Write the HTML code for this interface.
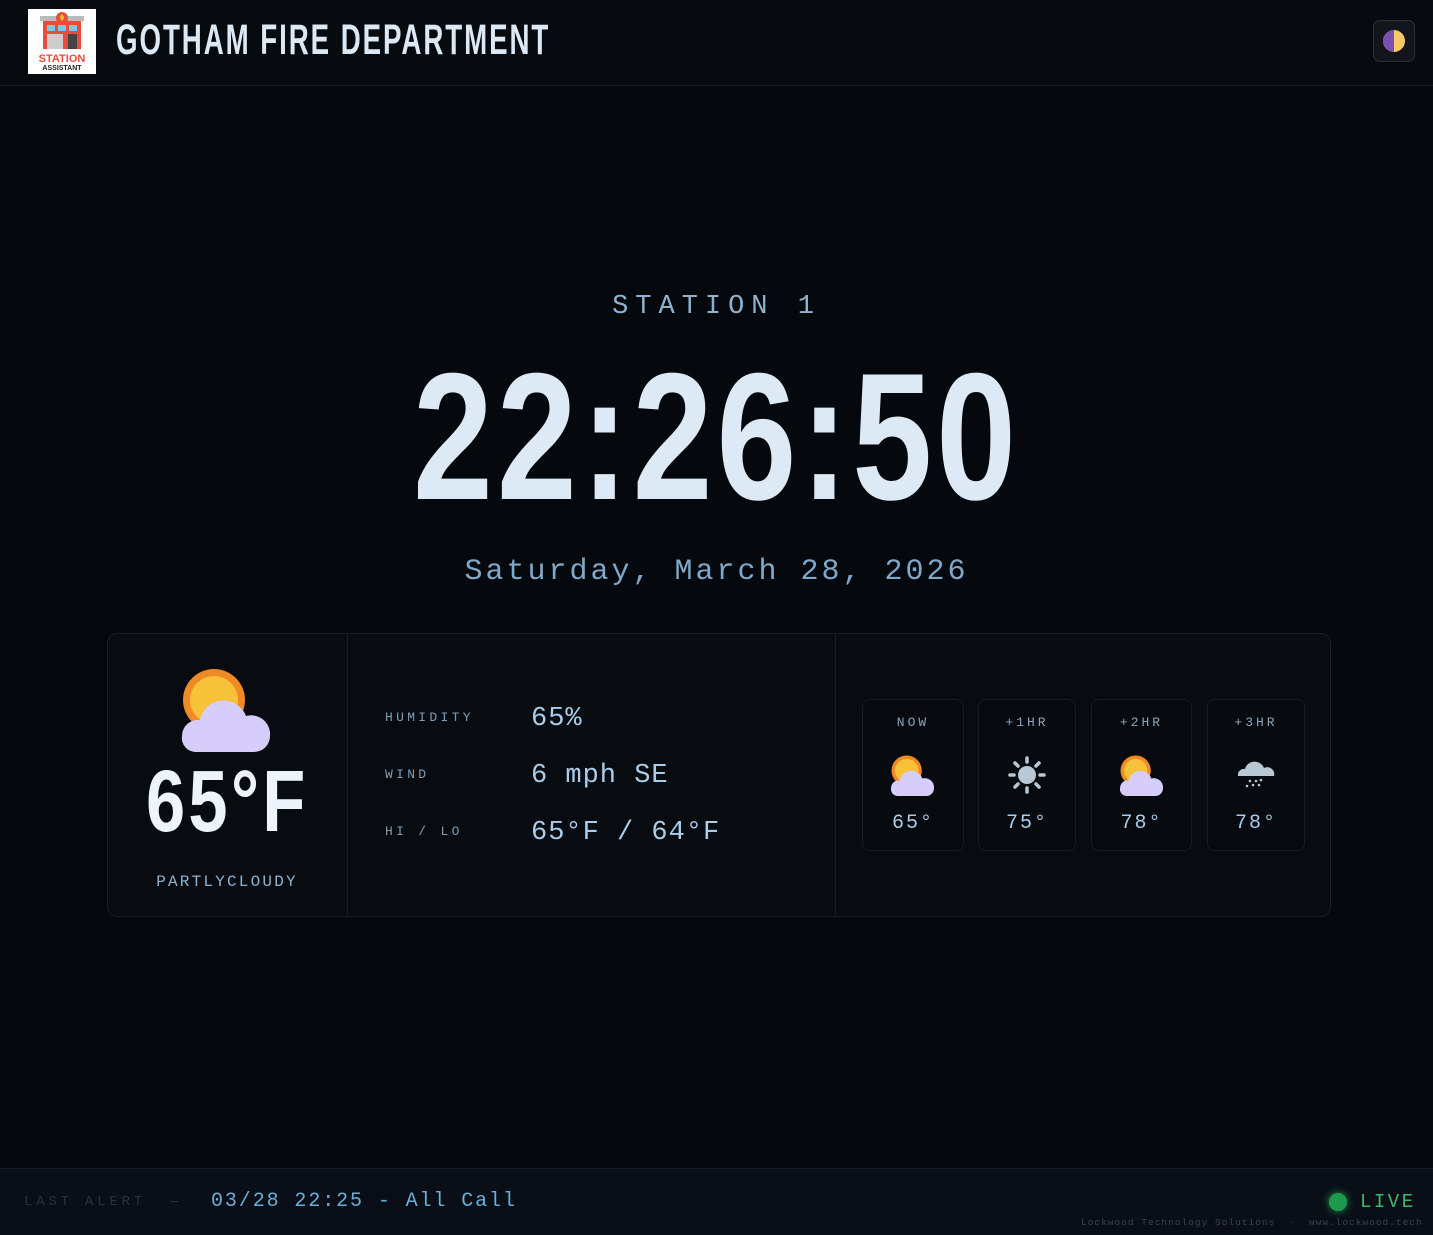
<!DOCTYPE html>
<html><head><meta charset="utf-8"><style>
*{margin:0;padding:0;box-sizing:border-box}
body{width:1433px;height:1235px;background:#05080c;position:relative;overflow:hidden;font-family:"Liberation Mono","DejaVu Sans Mono",monospace}
.a{position:absolute;white-space:nowrap}
.cond{font-family:"Liberation Sans",sans-serif;font-weight:bold;display:inline-block;transform-origin:left top}
.m{font-family:"Liberation Mono",monospace}
.lbl{font-size:13px;letter-spacing:3.3px;color:#7f9cb6}
.val{font-size:27px;color:#a9cdea;letter-spacing:1px}
.mc{position:absolute;top:699px;height:152px;border:1px solid #141c26;border-radius:8px;background:#070a0e;text-align:center}
.mc .h{position:absolute;top:15px;width:100%;font-size:13px;letter-spacing:3px;color:#8aa4bc}
.mc .t{position:absolute;top:112px;width:100%;font-size:20px;letter-spacing:2px;color:#a9cdea}
.mc svg{position:absolute;left:50%;top:55px;transform:translateX(-50%)}
</style></head><body>
<!-- header -->
<div class="a" style="left:0;top:0;width:1433px;height:86px;background:#070a0f;border-bottom:1px solid #141b24"></div>
<div class="a" style="left:28px;top:9px;width:68px;height:65px;background:#fff">
<svg width="68" height="65" viewBox="0 0 68 65">
<rect x="12" y="7" width="44" height="5" fill="#bbb"/><circle cx="34" cy="9" r="6" fill="#e74c3c"/><path d="M34 5c2 2 3 4 0 7-3-3-2-5 0-7z" fill="#f7c21b"/>
<rect x="15" y="12" width="38" height="28" fill="#e74c3c"/>
<rect x="19" y="16" width="8" height="6" fill="#7ec8e3"/><rect x="30" y="16" width="8" height="6" fill="#7ec8e3"/><rect x="41" y="16" width="8" height="6" fill="#7ec8e3"/>
<rect x="19" y="25" width="16" height="15" fill="#ccc"/><rect x="40" y="25" width="9" height="15" fill="#444"/>
<text x="34" y="53" text-anchor="middle" font-family="Liberation Sans" font-weight="bold" font-size="11" fill="#e74c3c">STATION</text>
<text x="34" y="61" text-anchor="middle" font-family="Liberation Sans" font-weight="bold" font-size="7" fill="#222">ASSISTANT</text>
</svg></div>
<div class="a" style="left:116px;top:16px"><span class="cond" style="font-size:43px;color:#dce9f5;letter-spacing:3px;transform:scaleX(.644)">GOTHAM FIRE DEPARTMENT</span></div>
<div class="a" style="left:1373px;top:20px;width:42px;height:42px;border:1px solid #2a3038;border-radius:7px;background:#12161c">
<svg width="42" height="42" viewBox="0 0 42 42" style="position:absolute;left:-1px;top:-1px"><circle cx="21" cy="21" r="11" fill="#f6c86a"/><path d="M21 10a11 11 0 0 0 0 22z" fill="#7a4fb0"/></svg></div>

<!-- station + clock -->
<div class="a m" style="left:0;width:1433px;top:292px;text-align:center;font-size:27px;letter-spacing:7px;color:#8fb2cf">STATION 1</div>
<div class="a" style="left:413px;top:338px"><span class="cond" style="font-size:181px;color:#dde9f5;letter-spacing:5px;transform:scaleX(.794);line-height:1.1">22:26:50</span></div>
<div class="a m" style="left:0;width:1433px;top:555px;text-align:center;font-size:30px;letter-spacing:3px;color:#7fa8c9">Saturday, March 28, 2026</div>

<!-- weather card -->
<div class="a" style="left:107px;top:633px;width:1224px;height:284px;border:1px solid #161f2a;border-radius:10px;background:#080c11"></div>
<div class="a" style="left:347px;top:634px;width:1px;height:282px;background:#151d27"></div>
<div class="a" style="left:835px;top:634px;width:1px;height:282px;background:#151d27"></div>
<svg class="a" style="left:180px;top:668px" width="94" height="86" viewBox="0 0 94 86">
<circle cx="34" cy="32" r="31" fill="#f08a24"/><circle cx="34" cy="32" r="24" fill="#f7c23a"/>
<path d="M16 84a14 14 0 0 1-14-16a16 16 0 0 1 18-16a24 24 0 0 1 46-4a19 19 0 0 1 24 20a16 16 0 0 1-16 16z" fill="#d6cdfa"/>
</svg>
<div class="a" style="left:146px;top:754px"><span class="cond" style="font-size:87px;color:#eef4fb;letter-spacing:4px;transform:scaleX(.81);line-height:1.1">65°F</span></div>
<div class="a m" style="left:107px;width:240px;top:873px;text-align:center;font-size:16px;letter-spacing:2.2px;color:#8fb2cf">PARTLYCLOUDY</div>

<div class="a lbl" style="left:385px;top:710px">HUMIDITY</div>
<div class="a lbl" style="left:385px;top:767px">WIND</div>
<div class="a lbl" style="left:385px;top:824px">HI / LO</div>
<div class="a val" style="left:531px;top:704px">65%</div>
<div class="a val" style="left:531px;top:761px">6 mph SE</div>
<div class="a val" style="left:531px;top:818px">65°F / 64°F</div>

<div class="mc" style="left:862px;width:102px"><div class="h">NOW</div>
<svg width="48" height="42" viewBox="0 0 94 86"><circle cx="34" cy="32" r="31" fill="#f08a24"/><circle cx="34" cy="32" r="24" fill="#f7c23a"/><path d="M16 84a14 14 0 0 1-14-16a16 16 0 0 1 18-16a24 24 0 0 1 46-4a19 19 0 0 1 24 20a16 16 0 0 1-16 16z" fill="#d6cdfa"/></svg>
<div class="t">65°</div></div>
<div class="mc" style="left:978px;width:98px"><div class="h">+1HR</div>
<svg width="38" height="38" viewBox="0 0 38 38" style="top:56px"><circle cx="19" cy="19" r="9" fill="#b8c8d4"/><g stroke="#b8c8d4" stroke-width="3.5" stroke-linecap="round"><path d="M19 2v4M19 32v4M2 19h4M32 19h4M7 7l3 3M28 28l3 3M31 7l-3 3M10 28l-3 3"/></g></svg>
<div class="t">75°</div></div>
<div class="mc" style="left:1091px;width:101px"><div class="h">+2HR</div>
<svg width="48" height="42" viewBox="0 0 94 86"><circle cx="34" cy="32" r="31" fill="#f08a24"/><circle cx="34" cy="32" r="24" fill="#f7c23a"/><path d="M16 84a14 14 0 0 1-14-16a16 16 0 0 1 18-16a24 24 0 0 1 46-4a19 19 0 0 1 24 20a16 16 0 0 1-16 16z" fill="#d6cdfa"/></svg>
<div class="t">78°</div></div>
<div class="mc" style="left:1207px;width:98px"><div class="h">+3HR</div>
<svg width="38" height="32" viewBox="0 0 38 32" style="top:58px"><path d="M1 18a6 6 0 0 1 7-7a10 10 0 0 1 19-1a7 7 0 0 1 10 8z" fill="#b8c8d4"/><g fill="#b8c8d4"><circle cx="10" cy="28" r="1.3"/><circle cx="16" cy="27" r="1.3"/><circle cx="22" cy="27" r="1.3"/><circle cx="13" cy="23" r="1.3"/><circle cx="19" cy="23" r="1.3"/><circle cx="24" cy="22" r="1.3"/></g></svg>
<div class="t">78°</div></div>

<!-- footer -->
<div class="a" style="left:0;top:1168px;width:1433px;height:67px;background:#0a0f17;border-top:1px solid #141c26"></div>
<div class="a m" style="left:24px;top:1194px;font-size:14px;letter-spacing:3.8px;color:#27323f">LAST ALERT &nbsp;—</div>
<div class="a m" style="left:211px;top:1190px;font-size:20px;letter-spacing:1.9px;color:#6aaed8">03/28 22:25 - All Call</div>
<div class="a" style="left:1329px;top:1193px;width:18px;height:18px;border-radius:50%;background:#1e9a4e;box-shadow:0 0 8px #1e9a4e"></div>
<div class="a m" style="left:1360px;top:1191px;font-size:19px;letter-spacing:2.5px;color:#3fb86a">LIVE</div>
<div class="a m" style="left:1081px;top:1217px;font-size:9.5px;letter-spacing:1px;color:#364250">Lockwood Technology Solutions &nbsp;· &nbsp;www.lockwood.tech</div>
</body></html>
